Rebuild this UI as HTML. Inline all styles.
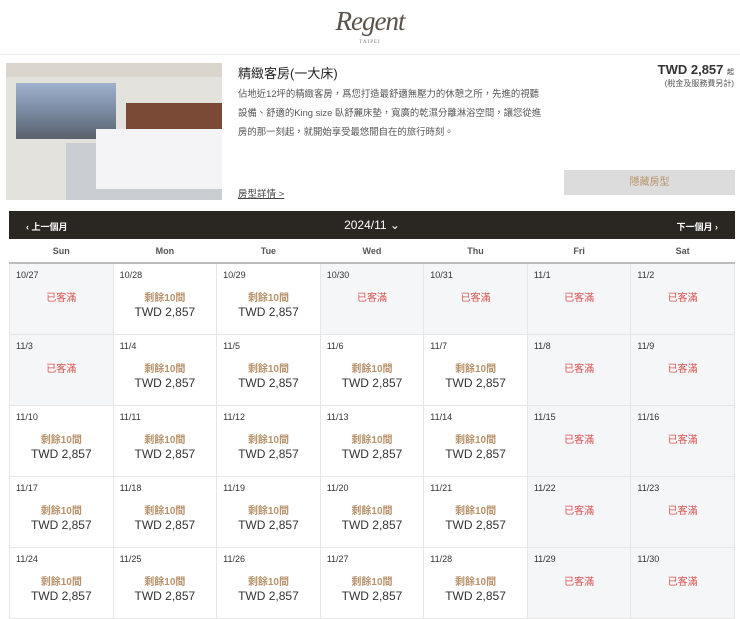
<!DOCTYPE html><html><head><meta charset="utf-8"><style>
*{margin:0;padding:0;box-sizing:border-box}
body{width:740px;height:602px;overflow:hidden;background:#fff;font-family:"Liberation Sans","Noto Sans CJK TC",sans-serif;color:#333;position:relative}
.abs{position:absolute}
.logo{left:0;width:740px;top:6px;text-align:center;font-family:"Liberation Serif",serif;font-style:italic;font-size:27px;color:#5a5248;letter-spacing:-1px}
.tp{left:0;width:740px;top:40px;text-align:center;font-family:"Liberation Serif",serif;font-size:5px;color:#777;letter-spacing:1px}
.sep{left:0;top:54px;width:740px;height:1px;background:#eee}
.img{left:6px;top:63px;width:216px;height:137px;background:#e4e2dc;overflow:hidden}
table{position:absolute;left:9px;top:239px;width:726px;border-collapse:collapse;table-layout:fixed}
th{height:24px;font-size:9px;font-weight:bold;color:#555;border-bottom:2px solid #bbb}
td{height:71px;border:1px solid #e6e6e6;vertical-align:top;text-align:center;position:relative}
td.f{background:#f5f6f8}
.d{position:absolute;left:6px;top:6px;font-size:9px;color:#333}
.r{margin-top:25px;font-size:10px;color:#d9534f}
.a{margin-top:25px;font-size:10px;color:#b8926a;font-weight:bold}
.p{font-size:12px;color:#333;margin-top:1px}
</style></head><body>
<div class="abs logo">Regent</div>
<div class="abs tp">TAIPEI</div>
<div class="abs sep"></div>
<div class="abs img">
<div class="abs" style="left:0;top:0;width:216px;height:14px;background:#d9d5cd"></div>
<div class="abs" style="left:10px;top:20px;width:100px;height:56px;background:linear-gradient(180deg,#9fb2cc,#7d8ea6 45%,#59616c)"></div>
<div class="abs" style="left:120px;top:40px;width:96px;height:30px;background:#7a4a36"></div>
<div class="abs" style="left:60px;top:80px;width:156px;height:57px;background:#c9ccd0"></div>
<div class="abs" style="left:90px;top:66px;width:126px;height:60px;background:#f4f4f6"></div>
</div>
<div class="abs" style="left:238px;top:63px;font-size:13px;color:#222">精緻客房(一大床)</div>
<div class="abs" style="left:238px;top:84px;white-space:nowrap;font-size:9.4px;line-height:19px;color:#555">佔地近12坪的精緻客房，爲您打造最舒適無壓力的休憩之所，先進的視聽<br>設備、舒適的King size 臥舒麗床墊，寬廣的乾濕分離淋浴空間，讓您從進<br>房的那一刻起，就開始享受最悠閒自在的旅行時刻。</div>
<div class="abs" style="left:238px;top:186px;font-size:9.5px;color:#444;text-decoration:underline">房型詳情 &gt;</div>
<div class="abs" style="right:6px;top:62px;font-size:13px;font-weight:bold;color:#333">TWD 2,857 <span style="font-size:7px;font-weight:normal">起</span></div>
<div class="abs" style="right:6px;top:78px;font-size:8px;color:#555">(稅金及服務費另計)</div>
<div class="abs" style="left:564px;top:170px;width:171px;height:25px;background:#dcdcdc;color:#b8926a;font-size:10px;text-align:center;line-height:25px">隱藏房型</div>
<div class="abs" style="left:9px;top:211px;width:726px;height:28px;background:#2a2622;color:#fff;font-size:9px;font-weight:bold">
<span class="abs" style="left:17px;top:9px">‹ 上一個月</span>
<span class="abs" style="left:0;width:726px;top:7px;text-align:center;font-size:12px;font-weight:normal">2024/11 ⌄</span>
<span class="abs" style="right:17px;top:9px">下一個月 ›</span></div>
<table>
<tr><th>Sun</th><th>Mon</th><th>Tue</th><th>Wed</th><th>Thu</th><th>Fri</th><th>Sat</th></tr>
<tr>
<td class="f"><span class="d">10/27</span><div class="r">已客滿</div></td>
<td><span class="d">10/28</span><div class="a">剩餘10間</div><div class="p">TWD 2,857</div></td>
<td><span class="d">10/29</span><div class="a">剩餘10間</div><div class="p">TWD 2,857</div></td>
<td class="f"><span class="d">10/30</span><div class="r">已客滿</div></td>
<td class="f"><span class="d">10/31</span><div class="r">已客滿</div></td>
<td class="f"><span class="d">11/1</span><div class="r">已客滿</div></td>
<td class="f"><span class="d">11/2</span><div class="r">已客滿</div></td></tr>
<tr>
<td class="f"><span class="d">11/3</span><div class="r">已客滿</div></td>
<td><span class="d">11/4</span><div class="a">剩餘10間</div><div class="p">TWD 2,857</div></td>
<td><span class="d">11/5</span><div class="a">剩餘10間</div><div class="p">TWD 2,857</div></td>
<td><span class="d">11/6</span><div class="a">剩餘10間</div><div class="p">TWD 2,857</div></td>
<td><span class="d">11/7</span><div class="a">剩餘10間</div><div class="p">TWD 2,857</div></td>
<td class="f"><span class="d">11/8</span><div class="r">已客滿</div></td>
<td class="f"><span class="d">11/9</span><div class="r">已客滿</div></td></tr>
<tr>
<td><span class="d">11/10</span><div class="a">剩餘10間</div><div class="p">TWD 2,857</div></td>
<td><span class="d">11/11</span><div class="a">剩餘10間</div><div class="p">TWD 2,857</div></td>
<td><span class="d">11/12</span><div class="a">剩餘10間</div><div class="p">TWD 2,857</div></td>
<td><span class="d">11/13</span><div class="a">剩餘10間</div><div class="p">TWD 2,857</div></td>
<td><span class="d">11/14</span><div class="a">剩餘10間</div><div class="p">TWD 2,857</div></td>
<td class="f"><span class="d">11/15</span><div class="r">已客滿</div></td>
<td class="f"><span class="d">11/16</span><div class="r">已客滿</div></td></tr>
<tr>
<td><span class="d">11/17</span><div class="a">剩餘10間</div><div class="p">TWD 2,857</div></td>
<td><span class="d">11/18</span><div class="a">剩餘10間</div><div class="p">TWD 2,857</div></td>
<td><span class="d">11/19</span><div class="a">剩餘10間</div><div class="p">TWD 2,857</div></td>
<td><span class="d">11/20</span><div class="a">剩餘10間</div><div class="p">TWD 2,857</div></td>
<td><span class="d">11/21</span><div class="a">剩餘10間</div><div class="p">TWD 2,857</div></td>
<td class="f"><span class="d">11/22</span><div class="r">已客滿</div></td>
<td class="f"><span class="d">11/23</span><div class="r">已客滿</div></td></tr>
<tr>
<td><span class="d">11/24</span><div class="a">剩餘10間</div><div class="p">TWD 2,857</div></td>
<td><span class="d">11/25</span><div class="a">剩餘10間</div><div class="p">TWD 2,857</div></td>
<td><span class="d">11/26</span><div class="a">剩餘10間</div><div class="p">TWD 2,857</div></td>
<td><span class="d">11/27</span><div class="a">剩餘10間</div><div class="p">TWD 2,857</div></td>
<td><span class="d">11/28</span><div class="a">剩餘10間</div><div class="p">TWD 2,857</div></td>
<td class="f"><span class="d">11/29</span><div class="r">已客滿</div></td>
<td class="f"><span class="d">11/30</span><div class="r">已客滿</div></td></tr>
</table>
</body></html>
